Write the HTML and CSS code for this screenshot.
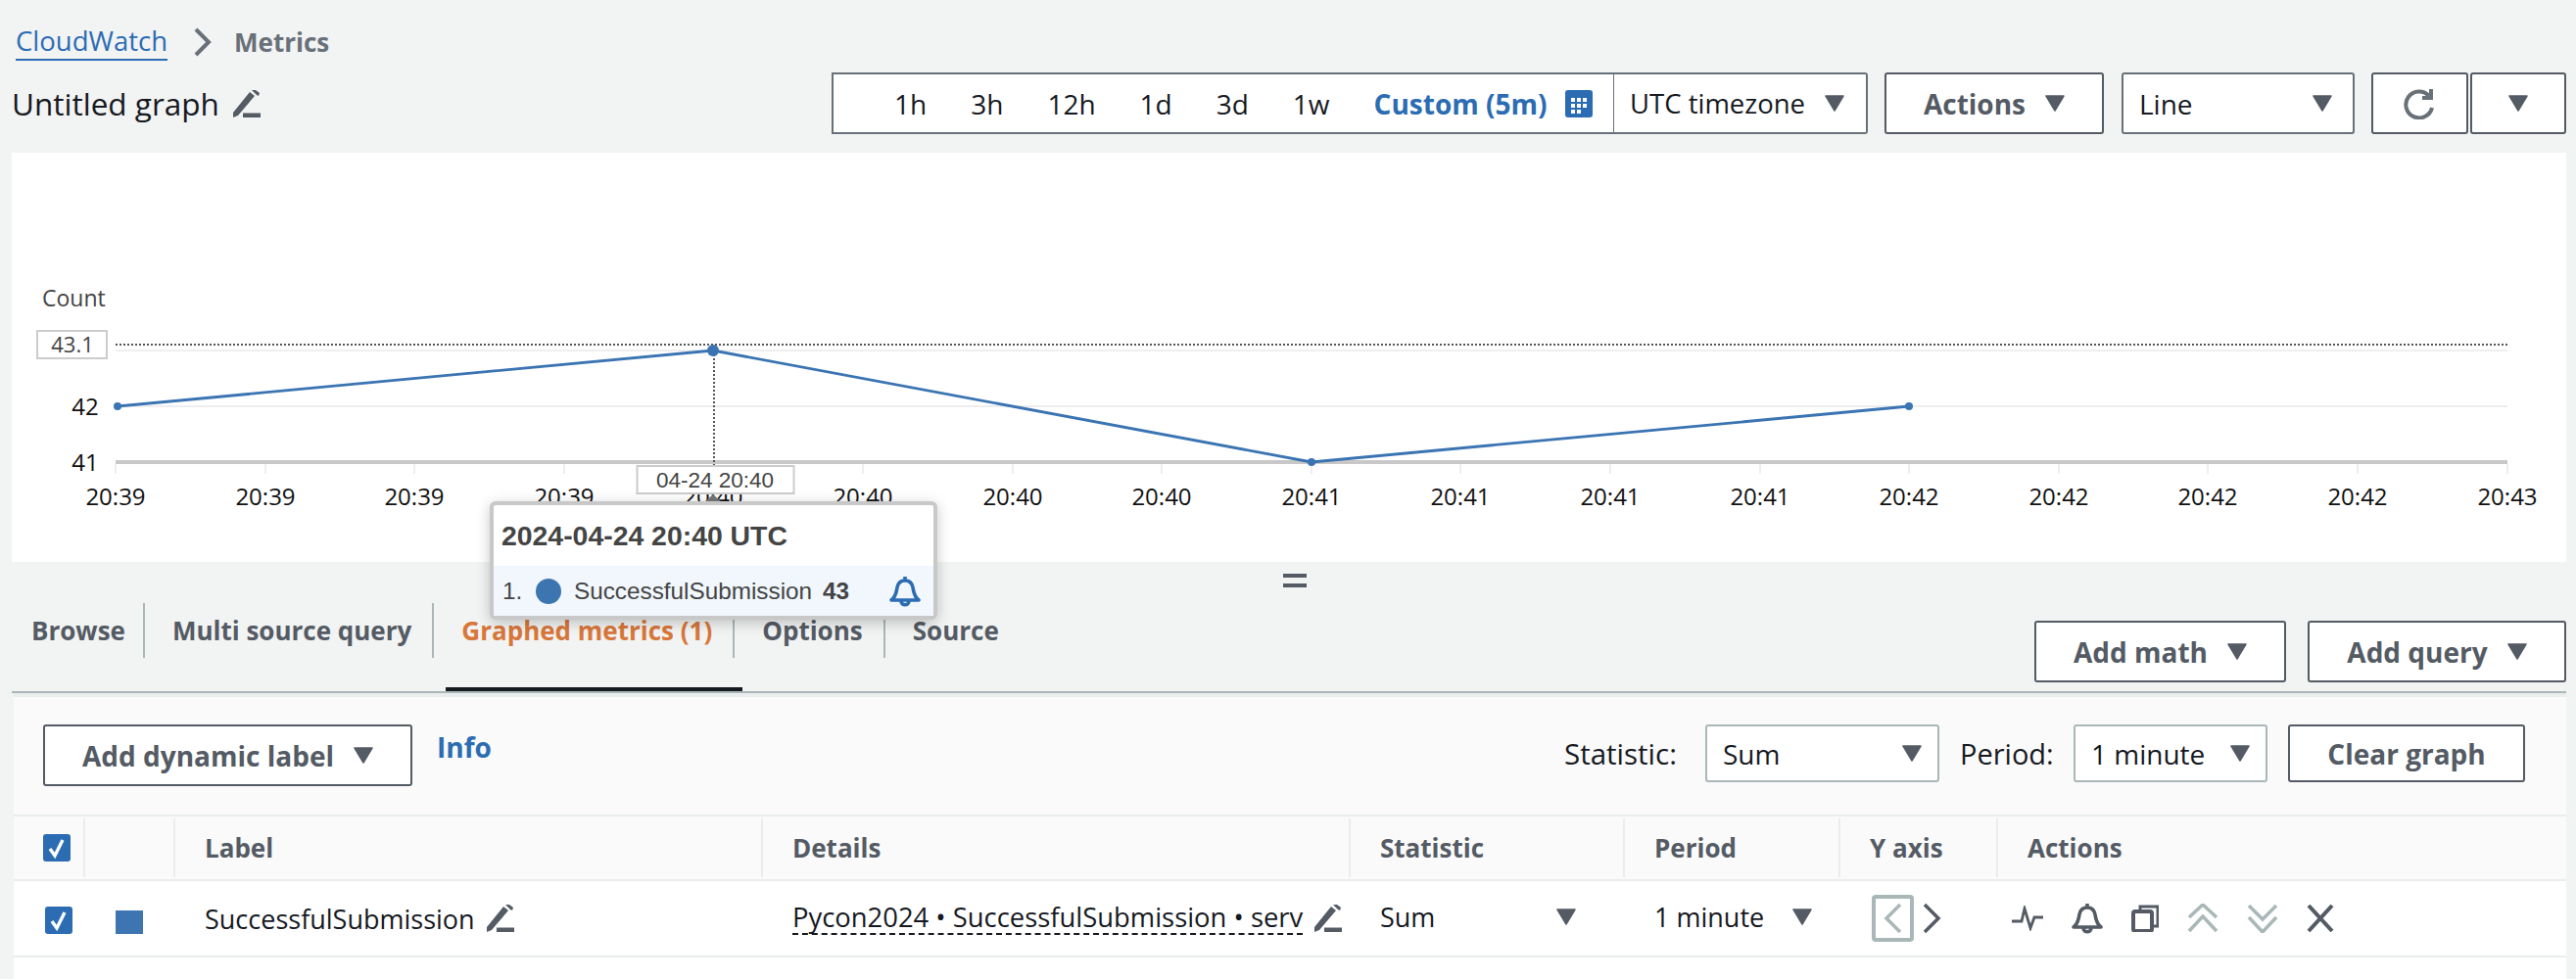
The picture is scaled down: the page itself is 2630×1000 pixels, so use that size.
FILE: index.html
```html
<!DOCTYPE html>
<html lang="en">
<head>
<meta charset="utf-8">
<title>CloudWatch Metrics</title>
<link rel="stylesheet" href="styles.css">
</head>
<body>
<svg class="defs" width="0" height="0" aria-hidden="true">
  <symbol id="pencil" viewBox="0 0 28 28"><path d="M0 23 L17 2 L22 6 L5 26 L0 28 Z M19 0 L23 0 L27 3 L26 6 L24 5 Z" fill="#545b64"/><rect x="10" y="23.5" width="18" height="4.5" fill="#545b64"/></symbol>
  <symbol id="caret" viewBox="0 0 20 17"><path d="M1 1 H19 L10 16 Z" fill="#545b64" stroke="#545b64" stroke-width="1.5" stroke-linejoin="round"/></symbol>
  <symbol id="check" viewBox="0 0 28 28"><rect width="28" height="28" rx="3" fill="#2b6cb3"/><path d="M7 15 L12 22 L20 6" fill="none" stroke="#fff" stroke-width="3.4"/></symbol>
</svg>
<div class="page">
  <nav class="crumbs">
    <a class="crumb-link">CloudWatch</a>
    <svg class="crumb-sep" width="20" height="30" viewBox="0 0 20 30"><path d="M3 2 L16 15 L3 28" fill="none" stroke="#687078" stroke-width="4"/></svg>
    <span class="crumb-current">Metrics</span>
  </nav>

  <div class="toolbar">
    <div class="title"><span>Untitled graph</span><svg class="pencil"><use href="#pencil"/></svg></div>
    <div class="range">
      <span>1h</span><span>3h</span><span>12h</span><span>1d</span><span>3d</span><span>1w</span>
      <span class="custom">Custom (5m)</span>
      <svg class="calendar" viewBox="0 0 28 28"><rect width="28" height="28" rx="3" fill="#2b6cb3"/><g fill="#fff"><rect x="6" y="8" width="4" height="4"/><rect x="12" y="8" width="4" height="4"/><rect x="18" y="8" width="4" height="4"/><rect x="6" y="14" width="4" height="4"/><rect x="12" y="14" width="4" height="4"/><rect x="18" y="14" width="4" height="4"/><rect x="6" y="20" width="4" height="4"/><rect x="12" y="20" width="4" height="4"/></g></svg>
    </div>
    <div class="ctl ctl-tz"><span>UTC timezone</span><svg class="caret"><use href="#caret"/></svg></div>
    <div class="ctl btn ctl-actions"><span>Actions</span><svg class="caret"><use href="#caret"/></svg></div>
    <div class="ctl ctl-line"><span>Line</span><svg class="caret"><use href="#caret"/></svg></div>
    <div class="ctl ctl-refresh"><svg width="34" height="32" viewBox="0 0 34 32"><path d="M26 8 A13.5 13.5 0 1 0 29 20" fill="none" stroke="#687078" stroke-width="4"/><path d="M28 1 V10 H19" fill="none" stroke="#687078" stroke-width="4"/></svg></div>
    <div class="ctl ctl-more"><svg class="caret"><use href="#caret"/></svg></div>
  </div>

  <section class="chart">
    <svg class="plot" viewBox="12 156 2608 418" width="2608" height="418">
      <g class="grid">
        <line x1="118" x2="2560" y1="358" y2="358"/>
        <line x1="118" x2="2560" y1="415" y2="415"/>
      </g>
      <g class="ticks">
        <line x1="118" x2="118" y1="474" y2="484"/><line x1="271" x2="271" y1="474" y2="484"/><line x1="423" x2="423" y1="474" y2="484"/><line x1="576" x2="576" y1="474" y2="484"/><line x1="728" x2="728" y1="474" y2="484"/><line x1="881" x2="881" y1="474" y2="484"/><line x1="1034" x2="1034" y1="474" y2="484"/><line x1="1186" x2="1186" y1="474" y2="484"/><line x1="1339" x2="1339" y1="474" y2="484"/><line x1="1491" x2="1491" y1="474" y2="484"/><line x1="1644" x2="1644" y1="474" y2="484"/><line x1="1797" x2="1797" y1="474" y2="484"/><line x1="1949" x2="1949" y1="474" y2="484"/><line x1="2102" x2="2102" y1="474" y2="484"/><line x1="2254" x2="2254" y1="474" y2="484"/><line x1="2407" x2="2407" y1="474" y2="484"/><line x1="2560" x2="2560" y1="474" y2="484"/>
      </g>
      <line class="axis" x1="118" x2="2560" y1="472" y2="472"/>
      <line class="hover-h" x1="118" x2="2560" y1="352" y2="352"/>
      <line class="hover-v" x1="729" x2="729" y1="358" y2="475"/>
      <polyline class="series" points="120,415 728,358 1339,472 1949,415"/>
      <g class="dots"><circle cx="120" cy="415" r="4"/><circle cx="728" cy="358" r="6"/><circle cx="1339" cy="472" r="4"/><circle cx="1949" cy="415" r="4"/></g>
      <text class="unit" x="43" y="313">Count</text>
      <rect class="val-box" x="38" y="338" width="71" height="28"/>
      <text class="unit value" x="74" y="360" text-anchor="middle">43.1</text>
      <text class="ylab" x="87" y="424" text-anchor="middle">42</text>
      <text class="ylab" x="87" y="481" text-anchor="middle">41</text>
      <g class="xlab" text-anchor="middle">
        <text x="118" y="516">20:39</text><text x="271" y="516">20:39</text><text x="423" y="516">20:39</text><text x="576" y="516">20:39</text><text x="728" y="516">20:40</text><text x="881" y="516">20:40</text><text x="1034" y="516">20:40</text><text x="1186" y="516">20:40</text><text x="1339" y="516">20:41</text><text x="1491" y="516">20:41</text><text x="1644" y="516">20:41</text><text x="1797" y="516">20:41</text><text x="1949" y="516">20:42</text><text x="2102" y="516">20:42</text><text x="2254" y="516">20:42</text><text x="2407" y="516">20:42</text><text x="2560" y="516">20:43</text>
      </g>
      <rect class="date-box" x="650.5" y="476" width="160" height="28"/>
      <text class="date-text" x="730" y="498" text-anchor="middle">04-24 20:40</text>
      <path class="date-arrow" d="M719 513 L728 505 L737 513 Z"/>
    </svg>
    <div class="tooltip">
      <div class="tip-head">2024-04-24 20:40 UTC</div>
      <div class="tip-row">
        <span class="tip-num">1.</span><span class="tip-dot"></span><span class="tip-name">SuccessfulSubmission</span><b class="tip-val">43</b>
        <svg class="tip-bell" viewBox="0 0 32 32"><path d="M2 25 C7 21 7 17 8 12 C9 7 12 5 16 5 C20 5 23 7 24 12 C25 17 25 21 30 25 Z M16 1 V5 M12 26 C12 31 20 31 20 26" fill="none" stroke="#2b6cb3" stroke-width="3.6" stroke-linejoin="round"/></svg>
      </div>
    </div>
  </section>

  <section class="tabbar">
    <div class="handle"></div>
    <div class="tabs">
      <span class="tab">Browse</span>
      <span class="tab">Multi source query</span>
      <span class="tab active">Graphed metrics (1)</span>
      <span class="tab">Options</span>
      <span class="tab">Source</span>
    </div>
    <div class="tab-actions">
      <div class="ctl btn add-math"><span>Add math</span><svg class="caret"><use href="#caret"/></svg></div>
      <div class="ctl btn add-query"><span>Add query</span><svg class="caret"><use href="#caret"/></svg></div>
    </div>
  </section>

  <section class="panel">
    <div class="panel-bar">
      <div class="ctl btn add-label"><span>Add dynamic label</span><svg class="caret"><use href="#caret"/></svg></div>
      <a class="info">Info</a>
      <span class="field-label stat-label">Statistic:</span>
      <div class="ctl soft stat-sel"><span>Sum</span><svg class="caret"><use href="#caret"/></svg></div>
      <span class="field-label period-label">Period:</span>
      <div class="ctl soft period-sel"><span>1 minute</span><svg class="caret"><use href="#caret"/></svg></div>
      <div class="ctl btn clear"><span>Clear graph</span></div>
    </div>
    <div class="table">
      <div class="thead">
        <div class="th th-check"><svg class="check"><use href="#check"/></svg></div>
        <div class="th"></div>
        <div class="th">Label</div>
        <div class="th">Details</div>
        <div class="th">Statistic</div>
        <div class="th">Period</div>
        <div class="th">Y axis</div>
        <div class="th">Actions</div>
      </div>
      <div class="tr">
        <div class="td td-check"><svg class="check"><use href="#check"/></svg></div>
        <div class="td td-color"><span class="swatch"></span></div>
        <div class="td"><span>SuccessfulSubmission</span><svg class="pencil"><use href="#pencil"/></svg></div>
        <div class="td"><span class="details">Pycon2024 • SuccessfulSubmission • serv</span><svg class="pencil"><use href="#pencil"/></svg></div>
        <div class="td td-sel"><span>Sum</span><svg class="caret"><use href="#caret"/></svg></div>
        <div class="td td-sel td-period"><span>1 minute</span><svg class="caret"><use href="#caret"/></svg></div>
        <div class="td td-axis">
          <span class="axis-left"><svg width="20" height="32" viewBox="0 0 20 32"><path d="M17 2 L3 16 L17 30" fill="none" stroke="#aab7b8" stroke-width="3.5"/></svg></span>
          <svg class="axis-right" width="20" height="32" viewBox="0 0 20 32"><path d="M2 2 L16 16 L2 30" fill="none" stroke="#545b64" stroke-width="3.5"/></svg>
        </div>
        <div class="td td-actions">
          <svg width="32" height="26" viewBox="0 0 32 26"><path d="M0 16 H10 L13 3 L19 23 L23 12 H32" fill="none" stroke="#545b64" stroke-width="2.8"/></svg>
          <svg width="32" height="32" viewBox="0 0 32 32"><path d="M2 25 C7 21 7 17 8 12 C9 7 12 5 16 5 C20 5 23 7 24 12 C25 17 25 21 30 25 Z M16 1 V5 M12 26 C12 31 20 31 20 26" fill="none" stroke="#545b64" stroke-width="3.6" stroke-linejoin="round"/></svg>
          <svg width="28" height="28" viewBox="0 0 28 28"><path d="M9 5 V2 H27 V22 H21" fill="none" stroke="#545b64" stroke-width="3"/><rect x="2" y="7" width="19" height="20" rx="2" fill="none" stroke="#545b64" stroke-width="4"/></svg>
          <svg width="32" height="30" viewBox="0 0 32 30"><path d="M2 14 L16 1 L30 14 M2 28 L16 13 L30 28" fill="none" stroke="#aab7b8" stroke-width="3.5"/></svg>
          <svg width="32" height="30" viewBox="0 0 32 30"><path d="M2 2 L16 16 L30 2 M2 14 L16 29 L30 14" fill="none" stroke="#aab7b8" stroke-width="3.5"/></svg>
          <svg width="28" height="28" viewBox="0 0 28 28"><path d="M2 1 L26 27 M26 1 L2 27" fill="none" stroke="#545b64" stroke-width="4"/></svg>
        </div>
      </div>
    </div>
  </section>
</div>
</body>
</html>
```
FILE: styles.css
```css
* { box-sizing: border-box; }
html, body { margin: 0; height: 1000px; overflow: hidden; background: #f2f3f3; }
body { font-family: "Open Sans", "Noto Sans", sans-serif; font-size: 28px; color: #16191f; }
.defs { position: absolute; }
.page { width: 2630px; height: 1000px; padding: 26px 10px 0 12px; }
svg { display: block; flex: none; }

.crumbs { display: flex; align-items: center; height: 34px; padding-left: 4px; }
.crumb-link { color: #2b6cb3; border-bottom: 2px solid #2b6cb3; line-height: 36px; font-size: 27.5px; }
.crumb-sep { margin: 0 22px 0 26px; }
.crumb-current { color: #687078; font-weight: 700; font-size: 26px; }

.toolbar { display: flex; margin-top: 14px; height: 63px; }
.title { flex: 1; display: flex; align-items: center; gap: 14px; font-size: 31.5px; }
.pencil { width: 28px; height: 28px; }

.range { width: 800px; height: 63px; display: flex; align-items: center; gap: 45px; padding-left: 62px; background: #fff; border: 2px solid #687078; }
.custom { color: #2b6cb3; font-weight: 700; }
.calendar { width: 28px; height: 28px; margin-left: -26px; }

.ctl { display: flex; align-items: center; justify-content: space-between; height: 63px; background: #fff; border: 2px solid #545b64; border-radius: 3px; padding: 0 16px; }
.caret { width: 20px; height: 17px; }
.btn { color: #545b64; font-weight: 700; justify-content: center; gap: 20px; }
.ctl-tz { width: 259px; margin-left: -1px; margin-right: 17px; border-color: #687078; border-left: 0; border-radius: 0 3px 3px 0; padding-right: 22px; font-size: 27.5px; }
.ctl-actions { width: 224px; margin-right: 18px; }
.ctl-line { width: 238px; margin-right: 17px; border-color: #687078; padding-right: 21px; }
.ctl-refresh { width: 99px; margin-right: 2px; justify-content: center; }
.ctl-more { width: 98px; justify-content: center; }

.chart { position: relative; margin-top: 19px; height: 418px; background: #fff; }
.plot text { font-family: "Open Sans", sans-serif; }
.grid line { stroke: #eeeeee; stroke-width: 2; }
.ticks line { stroke: #eeeeee; stroke-width: 2; }
.axis { stroke: #c8c8c8; stroke-width: 4; }
.hover-h, .hover-v { stroke: #555; stroke-width: 2; stroke-dasharray: 2 2; }
.series { fill: none; stroke: #3a74b2; stroke-width: 2.8; }
.dots circle { fill: #3a74b2; }
.unit { font-size: 23px; fill: #444; }
.unit.value { font-size: 22px; }
.ylab { font-size: 24px; fill: #111; }
.xlab text { font-size: 24px; fill: #111; }
.val-box, .date-box { fill: #fff; stroke: #ccc; stroke-width: 2; }
.plot .date-text { font-family: "Liberation Sans", Arial, sans-serif; font-size: 22.5px; fill: #444; }
.date-arrow { fill: #777; }

.tooltip { position: absolute; left: 488px; top: 356px; width: 457px; height: 121px; background: #fff; border: 4px solid #c8c8c8; border-radius: 6px; box-shadow: 0 3px 14px rgba(0,0,0,.22); font-family: "Liberation Sans", Arial, sans-serif; color: #444; z-index: 2; }
.tip-head { height: 62px; line-height: 62px; padding-left: 8px; font-size: 28.4px; font-weight: 700; }
.tip-row { height: 51px; display: flex; align-items: center; background: #f1f7fd; padding-left: 9px; font-size: 24.3px; }
.tip-dot { width: 26px; height: 26px; border-radius: 50%; background: #3c75b0; margin: 0 13px 0 14px; }
.tip-num { width: 20px; }
.tip-val { margin-left: 11px; }
.tip-bell { width: 32px; height: 32px; margin-left: auto; margin-right: 13px; }

.tabbar { position: relative; height: 134px; display: flex; justify-content: space-between; border-bottom: 2px solid #aab7b8; }
.handle { position: absolute; left: 1298px; top: 12px; width: 24px; height: 14px; border-top: 4px solid #545b64; border-bottom: 4px solid #545b64; }
.tabs { display: flex; align-items: stretch; margin-top: 42px; height: 56px; font-size: 26px; }
.tab { display: flex; align-items: center; font-weight: 700; color: #545b64; padding: 0 21px 0 28px; border-right: 2px solid #aab7b8; position: relative; }
.tab:first-child { padding: 0 18px 0 20px; }
.tab:last-child { border-right: 0; }
.tab.active { color: #d8773a; }
.tab.active::after { content: ""; position: absolute; left: 12px; right: -10px; top: 86px; height: 4px; background: #16191f; }
.tab-actions { display: flex; gap: 22px; margin-top: 60px; }
.add-math { width: 257px; }
.add-query { width: 264px; }

.panel { margin-left: 2px; height: 292px; border-top: 4px solid #eaeded; background: #fafafa; }
.panel-bar { display: flex; align-items: flex-start; height: 120px; padding: 28px 0 0 30px; }
.add-label { width: 377px; }
.info { color: #2b6cb3; font-weight: 700; margin: 0 0 0 25px; line-height: 46px; width: 1151px; }
.field-label { line-height: 60px; }
.stat-label { width: 144px; font-size: 29.5px; }
.panel-bar .soft { height: 59px; border-color: #aab7b8; }
.stat-sel { width: 239px; margin-right: 21px; }
.period-label { width: 116px; font-size: 29px; }
.period-sel { width: 198px; margin-right: 21px; }
.panel-bar .clear { width: 242px; height: 59px; }

.table { background: #fff; height: 168px; }
.thead, .tr { display: grid; grid-template-columns: 71px 92px 600px 600px 280px 220px 161px 582px; }
.thead { height: 68px; background: #fafafa; border-top: 2px solid #eaeded; border-bottom: 2px solid #eaeded; padding: 2px 0; }
.th { display: flex; align-items: center; padding-left: 30px; border-left: 2px solid #eaeded; font-weight: 700; color: #545b64; font-size: 26px; }
.th-check { border-left: 0; }
.check { width: 28px; height: 28px; }
.tr { height: 78px; border-bottom: 2px solid #eaeded; }
.td { display: flex; align-items: center; padding-left: 32px; font-size: 27px; }
.td .pencil { margin-left: 12px; }
.td-check { padding-top: 4px; }
.td-color { padding-left: 33px; }
.swatch { display: block; width: 28px; height: 24px; margin-top: 8px; background: #3c75b0; }
.details { border-bottom: 2px dashed #16191f; line-height: 32px; font-size: 27.4px; }
.td-sel { justify-content: space-between; padding-right: 48px; padding-bottom: 3px; }
.td-period { padding-right: 27px; }
.td-axis { padding-left: 34px; gap: 9px; }
.axis-left { display: flex; align-items: center; justify-content: center; width: 43px; height: 48px; border: 4px solid #aab7b8; border-radius: 4px; }
.td-actions { gap: 29px; padding-left: 16px; }
```
